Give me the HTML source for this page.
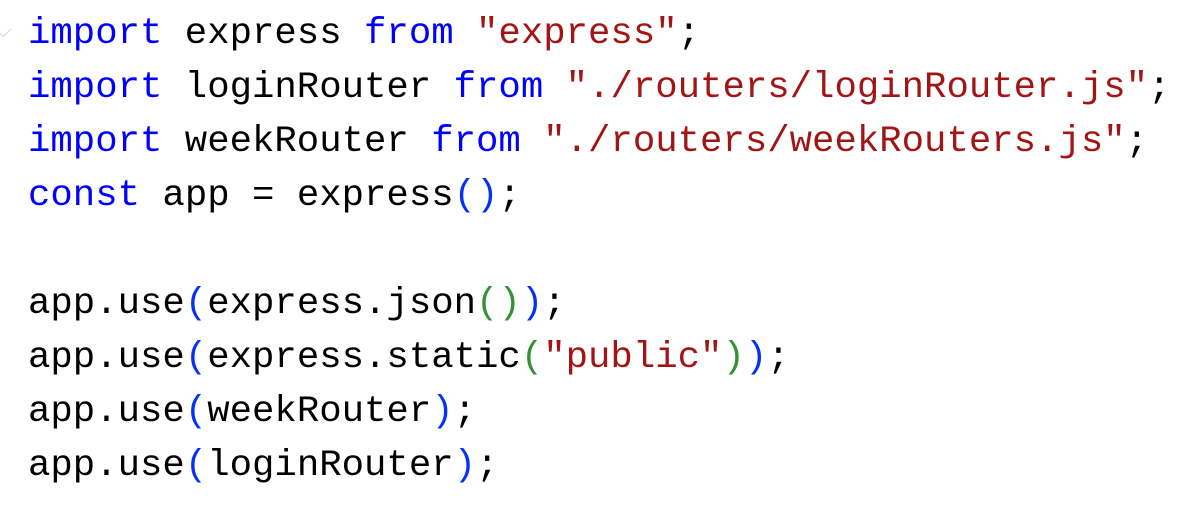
<!DOCTYPE html>
<html><head><meta charset="utf-8"><style>
html,body{margin:0;padding:0;background:#fff;width:1204px;height:514px;overflow:hidden}
pre{margin:0;position:absolute;left:28px;top:7px;font-family:"Liberation Mono",monospace;font-size:37.33px;line-height:54px;color:#000}
.k{color:#0000ff}.s{color:#a31515}.p{color:#0431fa}.g{color:#319331}
.chk{position:absolute;left:3px;top:26px;width:4px;height:10px;border-right:1px solid #ccc;border-bottom:1px solid #ccc;transform:rotate(45deg);opacity:.8}
</style></head><body>
<div class="chk"></div>
<pre><span class="k">import</span> express <span class="k">from</span> <span class="s">"express"</span>;
<span class="k">import</span> loginRouter <span class="k">from</span> <span class="s">"./routers/loginRouter.js"</span>;
<span class="k">import</span> weekRouter <span class="k">from</span> <span class="s">"./routers/weekRouters.js"</span>;
<span class="k">const</span> app = express<span class="p">()</span>;

app.use<span class="p">(</span>express.json<span class="g">()</span><span class="p">)</span>;
app.use<span class="p">(</span>express.static<span class="g">(</span><span class="s">"public"</span><span class="g">)</span><span class="p">)</span>;
app.use<span class="p">(</span>weekRouter<span class="p">)</span>;
app.use<span class="p">(</span>loginRouter<span class="p">)</span>;</pre>
</body></html>
